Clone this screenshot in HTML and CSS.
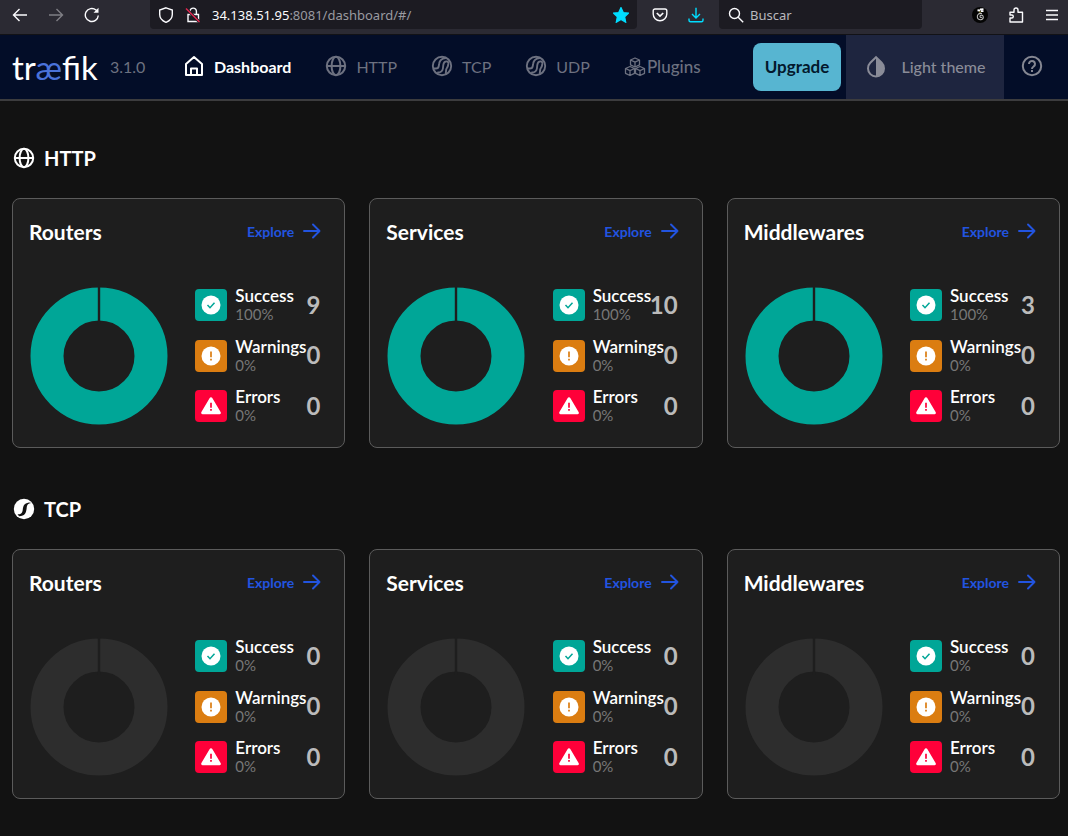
FILE: index.html
```html
<!DOCTYPE html>
<html lang="en">
<head>
<meta charset="utf-8">
<title>Traefik</title>
<link rel="stylesheet" href="styles.css">
</head>
<body>
<svg class="defs" aria-hidden="true">
  <symbol id="globe" viewBox="0 0 24 24"><g fill="none" stroke="currentColor" stroke-width="2"><circle cx="12" cy="12" r="9.2"/><ellipse cx="12" cy="12" rx="4.4" ry="9.2"/><path d="M3 12h18"/></g></symbol>
  <symbol id="ball" viewBox="0 0 24 24"><g fill="none" stroke="currentColor" stroke-width="1.9" stroke-linecap="round"><circle cx="12" cy="12" r="9.2"/><path d="M4 14.500h1.800c1.800 0 2.800-1 3-2.700l.4-2.300c.4-3 2.300-4.800 6.300-5.500"/><path d="M8 18.500c3.500-.2 4.600-1.700 4.900-4l.4-3.500c.3-2.300 1.400-3.600 3.200-3.600 1.900 0 2 1.400 1.800 2.600l-.4 2c-.3 1.500-1.500 2-1.700 3.500l-.4 3.500"/></g></symbol>
  <symbol id="ball-solid" viewBox="0 0 24 24"><circle cx="12" cy="12" r="10.200" fill="currentColor"/><path d="M5.500 17.200c4.200.2 4.700-1.400 5.200-4.200.6-4.200 1-6.800 6.300-7.600l2.400.6c-4.600.6-4.300 2.600-4.800 5.700-.7 4.300-1.500 7.300-7.500 7.500z" fill="#121212"/></symbol>
  <symbol id="arrow" viewBox="0 0 18 16"><path d="M1 8h15.500M10 1.500 16.500 8 10 14.500" fill="none" stroke="currentColor" stroke-width="1.900" stroke-linecap="round" stroke-linejoin="round"/></symbol>
  <symbol id="check" viewBox="0 0 20 20"><circle cx="10" cy="10" r="9.500" fill="#fff"/><path d="m6.500 10 2.500 2.700 4.500-5" fill="none" stroke="currentColor" stroke-width="1.500"/></symbol>
  <symbol id="warn" viewBox="0 0 20 20"><circle cx="10" cy="10" r="9.500" fill="#fff"/><path d="M10 5.500v5.700M10 12.800v1.800" fill="none" stroke="currentColor" stroke-width="1.700"/></symbol>
  <symbol id="error" viewBox="0 0 20 20"><path d="M10 2.800 18.300 16.800H1.700z" fill="#fff" stroke="#fff" stroke-width="3" stroke-linejoin="round"/><path d="M10 6.700v5M10 13v1.800" fill="none" stroke="currentColor" stroke-width="1.700"/></symbol>
</svg>

<header class="browser">
  <div class="history">
    <button class="tool" aria-label="Back"><svg viewBox="0 0 16 16"><path d="M15 8H1.500M7.500 2 1.500 8l6 6"/></svg></button>
    <button class="tool dim" aria-label="Forward"><svg viewBox="0 0 16 16"><path d="M1 8h13.500M8.500 2l6 6-6 6"/></svg></button>
    <button class="tool" aria-label="Reload"><svg viewBox="0 0 16 16"><path d="M14.300 8.500A6.500 6.500 0 1 1 12 3l1.500 1.500"/><path d="M14.500.8v5H9.500z" fill="currentColor" stroke="none"/></svg></button>
  </div>
  <div class="address">
    <svg viewBox="0 0 16 16"><path d="M8 .8 14.300 3v4.500c0 4-2.500 6.300-6.300 7.900C4.200 13.800 1.700 11.500 1.700 7.500V3z"/></svg>
    <svg viewBox="0 0 16 16"><path d="M3 7.500h10.500v7H3zM5 7.500V4.300a3.200 3.200 0 0 1 6.400 0v3.200"/><path d="m1 1.500 13.500 13.500" stroke="#1c1b22" stroke-width="3"/><path d="m1 1.500 13.500 13.500" stroke="#e22850"/></svg>
    <p class="url"><b>34.138.51.95</b>:8081/dashboard/#/</p>
    <button class="tool cyan" aria-label="Bookmark"><svg viewBox="0 0 16 16"><path d="m8 .7 2.200 4.900 5.200.6-3.800 3.600 1 5.300L8 12.500l-4.600 2.600 1-5.300L.6 6.200l5.200-.6z" fill="currentColor"/></svg></button>
  </div>
  <div class="mid-tools">
    <button class="tool" aria-label="Pocket"><svg viewBox="0 0 16 16"><path d="M3 2h10a1.800 1.800 0 0 1 1.800 1.800V7a6.800 6.800 0 0 1-13.600 0V3.800A1.800 1.800 0 0 1 3 2z"/><path d="M4.800 6 8 9l3.200-3" stroke-width="1.700"/></svg></button>
    <button class="tool cyan" aria-label="Downloads"><svg viewBox="0 0 16 16"><path d="M8 .8v10M4 7l4 4 4-4M1 11.500v1.800q0 1.500 1.500 1.500h11q1.500 0 1.500-1.500v-1.800"/></svg></button>
  </div>
  <label class="search"><svg viewBox="0 0 16 16"><circle cx="6.500" cy="6.500" r="5"/><path d="m10.200 10.200 5 5"/></svg><input type="search" placeholder="Buscar" aria-label="Buscar"></label>
  <div class="end-tools">
    <button class="tool" aria-label="Extension"><svg viewBox="0 0 16 16"><circle cx="8" cy="8" r="8" fill="#050505" stroke="none"/><path d="M5.500 3.200 8 3.500M8 2.500l3.500-.3M9 4h2.500" stroke-width="2"/><path d="M8 4.500v1" stroke="#d8c832"/><path d="M10 6.500c-4-.7-5 2-4.600 4 .7 3 6 3 5.900-.5-.2-2.400-3.300-2.400-3.300-.4 0 1 1.200 1.200 1.700.5" stroke="#bbb" stroke-width="1.100"/></svg></button>
    <button class="tool" aria-label="Extensions"><svg viewBox="0 0 16 16"><path d="M2 15V11h1.800a1.500 1.500 0 0 0 0-3H2V5.300h4V3a2 2 0 0 1 4 0v2.300h4.500V15z" stroke-linejoin="round"/></svg></button>
    <button class="tool" aria-label="Menu"><svg viewBox="0 0 16 16"><path d="M2 3.500h12M2 8h12M2 12.500h12"/></svg></button>
  </div>
</header>

<nav class="nav">
  <a class="logo" href="#" aria-label="traefik">tr<span>æ</span>fik</a>
  <span class="version">3.1.0</span>
  <div class="tabs">
    <a class="tab active" href="#"><svg viewBox="0 0 24 24" fill="none" stroke="currentColor" stroke-width="2" stroke-linejoin="round"><path d="M4 10 12 3l8 7v11H4zM9 21v-6.500h6V21"/></svg>Dashboard</a>
    <a class="tab" href="#"><svg><use href="#globe"/></svg>HTTP</a>
    <a class="tab" href="#"><svg><use href="#ball"/></svg>TCP</a>
    <a class="tab" href="#"><svg><use href="#ball"/></svg>UDP</a>
    <a class="tab plugins" href="#"><svg viewBox="0 0 24 24" fill="none" stroke="currentColor" stroke-width="1.300" stroke-linejoin="round"><path id="cube" d="m12 4 4.500 2v4.800L12 13 7.500 10.800V6zM7.500 6 12 8.200 16.500 6M12 8.200V13"/><use href="#cube" x="-5" y="8.500"/><use href="#cube" x="5" y="8.500"/></svg>Plugins</a>
  </div>
  <button class="upgrade">Upgrade</button>
  <button class="theme"><svg viewBox="0 0 24 24"><path d="M12 3.200 6.300 8.800a8 8 0 1 0 11.400 0z" fill="none" stroke="currentColor" stroke-width="2"/><path d="M12 3.200v19a8 8 0 0 0 5.700-13.400z" fill="currentColor"/></svg>Light theme</button>
  <button class="help" aria-label="Help"><svg viewBox="0 0 24 24" fill="none" stroke="currentColor" stroke-width="2"><circle cx="12" cy="12" r="9.200"/><path d="M9 10a3 3 0 1 1 4.700 2.400c-1.100.8-1.700 1.200-1.700 2.600M12 16v2"/></svg></button>
</nav>

<main class="page" id="page"></main>
<script src="app.js"></script>
</body>
</html>
```
FILE: styles.css
```css
* { box-sizing: border-box; }
body { margin: 0; background: #121212; color: #fff; font-family: Lato, "Open Sans", sans-serif; font-size: 16px; }
p, h2, h3 { margin: 0; }
button { border: 0; padding: 0; background: none; color: inherit; font: inherit; cursor: pointer; }
a { color: inherit; text-decoration: none; }
svg { display: block; flex: none; }
.defs { position: absolute; width: 0; height: 0; }

.browser { display: flex; height: 35px; padding-bottom: 5px; background: #2b2a33; border-bottom: 1px solid #121216; color: #fbfbfe; font-family: "Noto Sans", sans-serif; font-size: 13px; }
.browser svg { width: 16px; height: 16px; fill: none; stroke: currentColor; stroke-width: 1.4; }
.history, .mid-tools, .end-tools { display: flex; align-items: center; gap: 20px; }
.history { width: 150px; padding-left: 12px; }
.dim { opacity: .4; }
.cyan { color: #00ddff; }
.address { display: flex; flex: 1; align-items: center; gap: 11px; padding: 0 8px; background: #1c1b22; border-radius: 0 0 4px 4px; }
.url { flex: 1; color: #9a9aa0; white-space: nowrap; }
.url b { color: #fbfbfe; font-weight: 400; }
.mid-tools { width: 82px; padding-left: 15px; }
.search { display: flex; width: 203px; align-items: center; gap: 6px; padding: 0 9px; background: #1c1b22; border-radius: 0 0 4px 4px; }
.search input { width: 100%; min-width: 0; border: 0; padding: 0; outline: 0; background: none; color: #fbfbfe; font: inherit; }
.search input::placeholder { color: #b8b8bd; opacity: 1; }
.end-tools { justify-content: flex-end; width: 146px; padding-right: 8px; }

.nav { display: flex; height: 66px; align-items: center; padding-left: 12px; background: #030d28; border-bottom: 2px solid #3c3c3e; color: #6d7180; }
.logo { width: 98px; color: #fff; font-size: 33px; line-height: 48px; }
.logo span { color: #4a72da; }
.version { width: 72px; padding-bottom: 2px; }
.tabs { display: flex; flex: 1; gap: 33px; padding-bottom: 2px; }
.tab { display: flex; align-items: center; gap: 8px; }
.tab svg, .theme svg, .help svg { width: 24px; height: 24px; }
.tab.active { color: #fff; font-weight: 700; }
.tab.plugins { gap: 0; font-size: 17px; font-weight: 500; }
.upgrade { width: 88px; height: 48px; margin-right: 5px; padding-bottom: 2px; border-radius: 8px; background: #57b5d1; color: #03192d; font-size: 17px; font-weight: 700; }
.theme { display: flex; width: 158px; height: 64px; align-items: center; justify-content: center; gap: 13px; padding-bottom: 2px; background: #1e253f; color: #8a8c98; font-weight: 500; }
.help { display: grid; width: 64px; height: 64px; place-items: center; padding: 0 8px 2px 0; color: #858792; }

.page { padding: 41px 8px 0 12px; }
.group { margin-bottom: 45px; }
.group-title { display: flex; height: 32px; align-items: center; gap: 8px; margin-bottom: 24px; font-size: 20px; font-weight: 700; }
.group-title svg { width: 24px; height: 24px; }
.cards { display: grid; grid-template-columns: repeat(3, 1fr); gap: 24px; }
.card { min-height: 250px; padding: 16px; border: 1px solid #5b5b5b; border-radius: 8px; background: #1e1e1e; }
.card-head { display: flex; height: 32px; align-items: center; justify-content: space-between; padding-right: 7px; }
.card-head h3 { font-size: 21px; font-weight: 700; }
.explore { display: flex; align-items: center; gap: 9px; color: #2254e0; font-size: 14px; font-weight: 700; }
.explore svg { width: 18px; height: 16px; }
.card-body { display: flex; justify-content: space-between; padding-top: 39px; padding-right: 8px; }
.donut { width: 140px; height: 140px; color: #2d2d2d; }
.donut.full { color: #00a697; }
.stats { display: grid; width: 125px; gap: 12px; }
.stat { display: grid; height: 38px; grid-template-columns: 32px 1fr auto; align-items: center; gap: 8px; }
.badge { display: grid; width: 32px; height: 32px; place-items: center; border-radius: 4px; }
.badge svg { width: 20px; height: 20px; }
.success { background: #00a697; color: #00a697; }
.warnings { background: #db7d11; color: #db7d11; }
.errors { background: #ff0039; color: #ff0039; }
.stat-text { width: 0; line-height: 19px; }
.stat-text p { font-size: 17px; font-weight: 600; }
.stat-text span { display: block; color: #777; font-size: 15px; }
.count { padding-bottom: 2px; color: #bbb; font-size: 24px; font-weight: 700; }
```
FILE: app.js
```js
const groups = [
  { name: 'HTTP', icon: 'globe', cards: [['Routers', 9], ['Services', 10], ['Middlewares', 3]] },
  { name: 'TCP', icon: 'ball-solid', cards: [['Routers', 0], ['Services', 0], ['Middlewares', 0]] }
];

const stat = (label, icon, percent, count) => `
  <div class="stat">
    <div class="badge ${label.toLowerCase()}"><svg><use href="#${icon}"/></svg></div>
    <div class="stat-text"><p>${label}</p><span>${percent}%</span></div>
    <strong class="count">${count}</strong>
  </div>`;

const card = ([name, total]) => `
  <article class="card">
    <div class="card-head"><h3>${name}</h3><a class="explore" href="#">Explore <svg><use href="#arrow"/></svg></a></div>
    <div class="card-body">
      <svg class="donut ${total ? 'full' : ''}" viewBox="0 0 140 140"><circle cx="70" cy="70" r="52" fill="none" stroke="currentColor" stroke-width="33"/><path d="M70 0v38" stroke="#1e1e1e" stroke-width="2.400"/></svg>
      <div class="stats">
        ${stat('Success', 'check', total ? 100 : 0, total)}
        ${stat('Warnings', 'warn', 0, 0)}
        ${stat('Errors', 'error', 0, 0)}
      </div>
    </div>
  </article>`;

document.getElementById('page').innerHTML = groups.map(g => `
  <section class="group">
    <h2 class="group-title"><svg><use href="#${g.icon}"/></svg>${g.name}</h2>
    <div class="cards">${g.cards.map(card).join('')}</div>
  </section>`).join('');
```
